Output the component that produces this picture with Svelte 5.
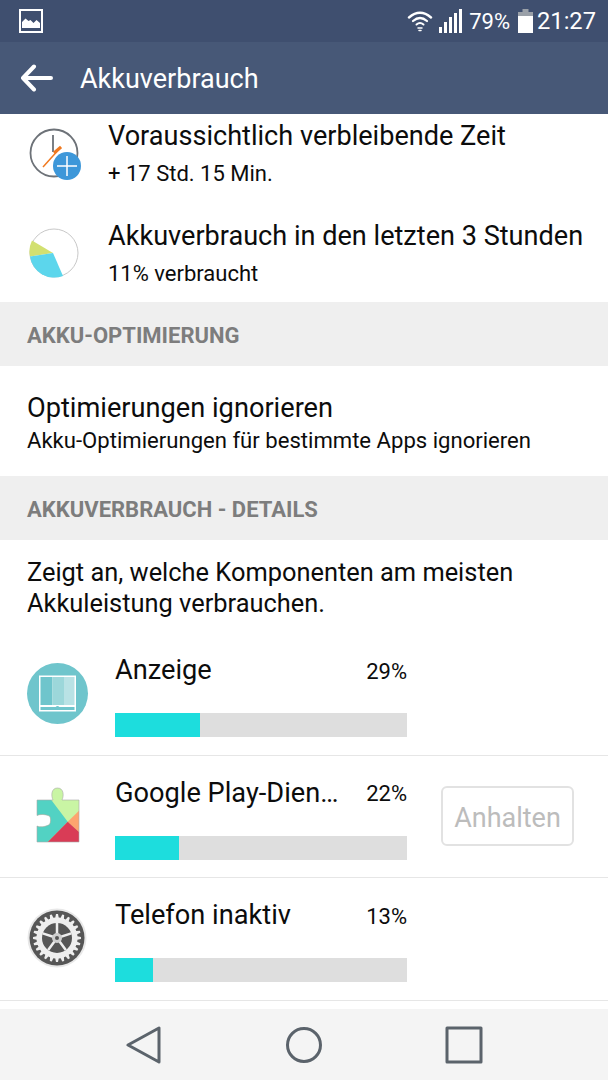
<script lang="ts">
	const apps = [
		{ name: 'Anzeige', pct: 29, fill: 85, icon: 'display' },
		{ name: 'Google Play-Dien…', pct: 22, fill: 64, icon: 'play', action: 'Anhalten' },
		{ name: 'Telefon inaktiv', pct: 13, fill: 38, icon: 'gear' }
	];

	const puzzleOutline =
		'M10 15H26C24 11 24 3 30.500 3 37 3 37 11 35 15H52V57H10V41C13 42.500 18 42 22.500 39.500 24 37 24 33 22.500 31 18 29 13 29 10 30.500z';

	// outline of the cog wheel, 24 teeth
	const gearPath = (() => {
		const pts: string[] = [];
		const n = 24;
		for (let i = 0; i < n; i++) {
			const a = (i / n) * Math.PI * 2;
			const w = (Math.PI * 2) / n;
			const p = (r: number, t: number) =>
				`${(30 + r * Math.cos(t)).toFixed(2)} ${(30 + r * Math.sin(t)).toFixed(2)}`;
			pts.push(p(20.5, a - w * 0.32), p(24, a - w * 0.16), p(24, a + w * 0.16), p(20.5, a + w * 0.32));
		}
		return 'M' + pts.join('L') + 'Z';
	})();
</script>

<div class="phone">
	<header class="status">
		<svg class="pic" viewBox="0 0 24 24" width="24" height="24">
			<rect x="1" y="1" width="22" height="22" fill="none" stroke="#fff" stroke-width="2" />
			<path d="M3 19v-6l3.500-3.500 3 2.500 2-1 3 3 3-3 3.500 3v5z" fill="#fff" />
		</svg>
		<div class="status-right">
			<svg width="26" height="24" viewBox="0 0 26 24" fill="none" stroke="#fff" stroke-linecap="round">
				<path d="M2 8.500Q13 -1 24 8.500" stroke-width="2.400" />
				<path d="M6 12Q13 6 20 12" stroke-width="2.200" />
				<path d="M9.500 15.500Q13 12.500 16.500 15.500" stroke-width="2" />
				<path d="M11 19h4M12 21.500h2" stroke-width="1.500" />
			</svg>
			<div class="signal">
				<i style="height: 6px"></i>
				<i style="height: 11px"></i>
				<i style="height: 16px"></i>
				<i style="height: 20px"></i>
				<i style="height: 24px"></i>
			</div>
			<span class="pct">79%</span>
			<svg width="15" height="24" viewBox="0 0 15 24">
				<path d="M4.500 0h6v3h-6zM0 3h15v4H0z" fill="#9aa0a8" />
				<rect y="7" width="15" height="17" fill="#fff" />
			</svg>
			<span class="time">21:27</span>
		</div>
	</header>

	<div class="toolbar">
		<svg width="34" height="28" viewBox="0 0 34 28" fill="none" stroke="#fff" stroke-width="4" stroke-linecap="round" stroke-linejoin="round">
			<path d="M31 14H3M14 2.500L3 14l11 11.500" />
		</svg>
		<h1>Akkuverbrauch</h1>
	</div>

	<main>
		<section class="info clipped">
			<svg class="info-icon" viewBox="0 0 60 60" width="60" height="60">
				<circle cx="27" cy="26" r="23.500" fill="#fff" stroke="#6d7278" stroke-width="1.800" />
				<path d="M26 8v17" stroke="#6d7278" stroke-width="1.800" fill="none" />
				<path d="M16 40L34 20" stroke="#f0791f" stroke-width="1.500" fill="none" />
				<path d="M27 26L34 20" stroke="#f0791f" stroke-width="3" fill="none" />
				<circle cx="40" cy="39" r="14" fill="#3d97d9" />
				<path d="M40 29v20M30 39h20" stroke="#fff" stroke-width="1.500" />
			</svg>
			<div>
				<div class="info-title">Voraussichtlich verbleibende Zeit</div>
				<div class="info-sub">+ 17 Std. 15 Min.</div>
			</div>
		</section>
		<section class="info">
			<svg class="info-icon" viewBox="0 0 60 60" width="60" height="60">
				<circle cx="27" cy="26" r="24" fill="#fff" stroke="#c8c8c8" stroke-width="1" />
				<path d="M26 26L5 13.500A24.500 24.500 0 0 0 3 29.500z" fill="#d2e070" />
				<path d="M26 26L3 29.500A24.500 24.500 0 0 0 36 49z" fill="#5cd6ec" />
			</svg>
			<div>
				<div class="info-title">Akkuverbrauch in den letzten 3 Stunden</div>
				<div class="info-sub">11% verbraucht</div>
			</div>
		</section>

		<h2 class="band">AKKU-OPTIMIERUNG</h2>
		<section class="optimize">
			<div class="opt-title">Optimierungen ignorieren</div>
			<div class="opt-sub">Akku-Optimierungen für bestimmte Apps ignorieren</div>
		</section>

		<h2 class="band">AKKUVERBRAUCH - DETAILS</h2>
		<p class="desc">Zeigt an, welche Komponenten am meisten Akkuleistung verbrauchen.</p>

		<ul class="apps">
			{#each apps as app}
				<li class="app">
					<div class="app-icon">
						{#if app.icon === 'display'}
							<svg viewBox="0 0 62 62" width="62" height="62">
								<circle cx="30.500" cy="30.500" r="30.500" fill="#6fc5cc" />
								<rect x="12" y="12.500" width="37" height="36" fill="#fff" />
								<rect x="13.500" y="14" width="12" height="28" fill="#6fc5cc" />
								<rect x="25.500" y="14" width="11.500" height="28" fill="#9cd7da" />
								<rect x="37" y="14" width="10.500" height="28" fill="#b9e2e5" />
								<rect x="13.500" y="44" width="34" height="3" fill="#6fc5cc" />
								<circle cx="30.500" cy="45" r="2" fill="#6fc5cc" />
							</svg>
						{:else if app.icon === 'play'}
							<svg viewBox="0 0 62 62" width="62" height="62">
								<defs>
									<clipPath id="puzzle">
										<path d={puzzleOutline} />
									</clipPath>
								</defs>
								<g clip-path="url(#puzzle)">
									<rect width="62" height="62" fill="#c9f5a4" />
									<path d="M5 0H13L40.700 36.700 20.700 57H5z" fill="#52d2c3" />
									<path d="M40.700 36.700L52 25.700V47z" fill="#fda56f" />
									<path d="M40.700 36.700L20.700 57H52V47z" fill="#d93c56" />
								</g>
								<path d={puzzleOutline} fill="none" stroke="#a8a8a8" stroke-width="0.600" />
							</svg>
						{:else}
							<svg viewBox="0 0 60 60" width="60" height="60">
								<circle cx="30" cy="30" r="29.500" fill="#e8e8e8" />
								<circle cx="30" cy="30" r="27.500" fill="#565656" />
								<path d={gearPath} fill="#eeeeee" />
								<circle cx="30" cy="30" r="15" fill="#565656" />
								<g stroke="#eeeeee" stroke-width="2.500">
									<path d="M30 30V15M30 30L44.300 25.400M30 30L38.800 42.100M30 30L21.200 42.100M30 30L15.700 25.400" />
								</g>
								<circle cx="30" cy="30" r="5" fill="#cfcfcf" />
								<circle cx="30" cy="30" r="2" fill="#555" />
							</svg>
						{/if}
					</div>
					<div class="app-main">
						<div class="app-head">
							<span class="app-name">{app.name}</span>
							<span class="app-pct">{app.pct}%</span>
						</div>
						<div class="bar"><div class="bar-fill" style="width: {app.fill}px"></div></div>
					</div>
					{#if app.action}
						<button class="stop" disabled>{app.action}</button>
					{/if}
				</li>
			{/each}
		</ul>
	</main>

	<nav class="softkeys">
		<svg width="36" height="38" viewBox="0 0 36 38" fill="none" stroke="#5b636b" stroke-width="3" stroke-linejoin="round">
			<path d="M33 2V36L2 19z" />
		</svg>
		<svg width="38" height="38" viewBox="0 0 38 38" fill="none" stroke="#5b636b" stroke-width="3">
			<circle cx="19" cy="19" r="16.500" />
		</svg>
		<svg width="38" height="38" viewBox="0 0 38 38" fill="none" stroke="#5b636b" stroke-width="3" stroke-linejoin="round">
			<rect x="2" y="2" width="34" height="34" />
		</svg>
	</nav>
</div>

<style>
	:global(body) {
		margin: 0;
		background: #fff;
		font-family: Roboto, 'Liberation Sans', sans-serif;
	}

	.phone {
		width: 608px;
		height: 1080px;
		display: flex;
		flex-direction: column;
		overflow: hidden;
		color: #0c0c0c;
	}

	.status {
		height: 42px;
		flex: none;
		box-sizing: border-box;
		padding: 0 12px 0 19px;
		display: flex;
		align-items: center;
		justify-content: space-between;
		background: #3f4f6f;
		color: #fff;
	}

	.status-right {
		display: flex;
		align-items: center;
	}

	.signal {
		display: flex;
		align-items: flex-end;
		gap: 2px;
		height: 24px;
		margin-left: 6px;
	}

	.signal i {
		width: 3px;
		background: #fff;
	}

	.pct {
		font-size: 22px;
		margin: 0 8px 0 7px;
	}

	.time {
		font-size: 23.700px;
		margin-left: 4px;
	}

	.toolbar {
		height: 72px;
		flex: none;
		box-sizing: border-box;
		padding-left: 20px;
		display: flex;
		align-items: center;
		gap: 26px;
		background: #475877;
		color: #fff;
	}

	.toolbar h1 {
		margin: 2px 0 0;
		font-size: 27px;
		font-weight: 400;
	}

	main {
		flex: 1;
		overflow: hidden;
	}

	.info {
		height: 100px;
		box-sizing: border-box;
		padding: 16px 0 0 27px;
		display: flex;
		gap: 21px;
	}

	.info.clipped {
		height: 88px;
		padding-top: 4px;
	}

	.info-icon {
		flex: none;
		margin-top: 9px;
	}

	.info-title {
		font-size: 27.100px;
		line-height: 36px;
		white-space: nowrap;
	}

	.info-sub {
		font-size: 22px;
		line-height: 26px;
		margin-top: 7px;
	}

	.band {
		margin: 0;
		height: 64px;
		box-sizing: border-box;
		padding: 2px 0 0 27px;
		display: flex;
		align-items: center;
		background: #efefef;
		color: #7d7d7d;
		font-size: 22px;
		font-weight: 700;
	}

	.optimize {
		height: 110px;
		box-sizing: border-box;
		padding: 24px 0 0 27px;
	}

	.opt-title {
		font-size: 27.200px;
		line-height: 36px;
	}

	.opt-sub {
		font-size: 22.100px;
		line-height: 28px;
	}

	.desc {
		margin: 0;
		padding: 17px 27px 0;
		font-size: 25.400px;
		line-height: 31px;
		height: 93px;
		box-sizing: border-box;
	}

	.apps {
		list-style: none;
		margin: 0;
		padding: 0;
	}

	.app {
		height: 122.500px;
		box-sizing: border-box;
		border-bottom: 1px solid #e6e6e6;
		padding: 0 34px 0 27px;
		display: flex;
		align-items: center;
	}

	.app-icon {
		width: 88px;
		flex: none;
		height: 62px;
	}

	.app-main {
		width: 292px;
		flex: none;
		align-self: flex-start;
		padding-top: 19px;
	}

	.app-head {
		display: flex;
		justify-content: space-between;
		align-items: center;
		height: 36px;
	}

	.app-name {
		font-size: 27.200px;
	}

	.app-pct {
		font-size: 22px;
		margin-top: 2px;
	}

	.bar {
		height: 24px;
		margin-top: 25px;
		background: #dedede;
	}

	.bar-fill {
		height: 100%;
		background: #1ddddd;
	}

	.stop {
		margin-left: auto;
		width: 133px;
		height: 60px;
		padding: 3px 0 0;
		background: #fff;
		border: 2px solid #e2e2e2;
		border-radius: 6px;
		color: #bcbcbc;
		font: 400 27px Roboto, sans-serif;
	}

	.softkeys {
		height: 71px;
		flex: none;
		display: flex;
		align-items: center;
		justify-content: space-between;
		box-sizing: border-box;
		padding: 0 125px 0 126px;
		background: #f4f4f4;
	}
</style>
